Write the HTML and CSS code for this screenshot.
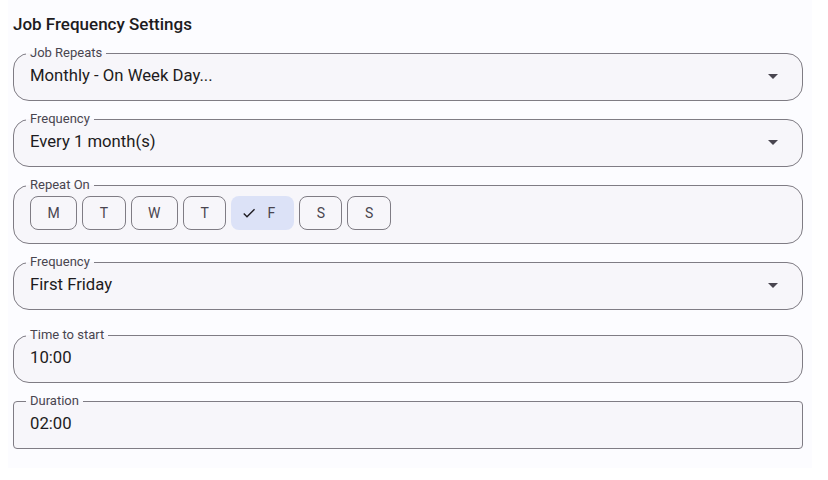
FILE: index.html
```html
<!DOCTYPE html>
<html lang="en">
<head>
<meta charset="utf-8">
<title>Job Frequency Settings</title>
<link rel="stylesheet" href="styles.css">
</head>
<body>
<div class="panel">
  <h2 class="title">Job Frequency Settings</h2>

  <fieldset class="field">
    <legend>Job Repeats</legend>
    <div class="row">
      <span class="value">Monthly - On Week Day...</span>
      <svg class="arrow" viewBox="0 0 24 24" width="24" height="24"><path d="M7 10l5 5 5-5z"/></svg>
    </div>
  </fieldset>

  <fieldset class="field">
    <legend>Frequency</legend>
    <div class="row">
      <span class="value">Every 1 month(s)</span>
      <svg class="arrow" viewBox="0 0 24 24" width="24" height="24"><path d="M7 10l5 5 5-5z"/></svg>
    </div>
  </fieldset>

  <fieldset class="field">
    <legend>Repeat On</legend>
    <div class="chips">
      <span class="chip">M</span>
      <span class="chip">T</span>
      <span class="chip">W</span>
      <span class="chip">T</span>
      <span class="chip selected"><svg class="check" viewBox="0 0 24 24" width="16" height="16"><path d="M9 16.17L4.83 12l-1.42 1.41L9 19 21 7l-1.41-1.41z"/></svg>F</span>
      <span class="chip">S</span>
      <span class="chip">S</span>
    </div>
  </fieldset>

  <fieldset class="field">
    <legend>Frequency</legend>
    <div class="row">
      <span class="value">First Friday</span>
      <svg class="arrow" viewBox="0 0 24 24" width="24" height="24"><path d="M7 10l5 5 5-5z"/></svg>
    </div>
  </fieldset>

  <fieldset class="field time">
    <legend>Time to start</legend>
    <div class="row">
      <span class="value">10:00</span>
    </div>
  </fieldset>

  <fieldset class="field square">
    <legend>Duration</legend>
    <div class="row">
      <span class="value">02:00</span>
    </div>
  </fieldset>
</div>
</body>
</html>
```

FILE: styles.css
```css
html, body {
  margin: 0;
  padding: 0;
  background: #ffffff;
}

body {
  font-family: Roboto, "Noto Sans", Arial, sans-serif;
  color: #1d1b20;
}

.panel {
  margin-left: 8px;
  width: 804px;
  box-sizing: border-box;
  padding: 14px 9px 19px 5px;
  background: #fcfcff;
}

.title {
  margin: 0 0 11px 0;
  font-size: 17px;
  line-height: 20px;
  font-weight: 500;
  color: #1d1b20;
}

.field {
  margin: 0 0 10px 0;
  padding: 0 17px 0 12px;
  border: 1px solid #7f7c84;
  border-radius: 16px;
  background: #f7f6fa;
  min-width: 0;
}

.field:last-child {
  margin-bottom: 0;
}

.field.time {
  margin-top: 17px;
}

.field.square {
  border-radius: 4px;
}

.field legend {
  padding: 0 4px;
  font-size: 13px;
  line-height: 16px;
  color: #49454f;
}

.row {
  display: flex;
  align-items: center;
  justify-content: space-between;
  padding: 3px 0 12px 4px;
  height: 24px;
}

.value {
  font-size: 16.7px;
  line-height: 24px;
  color: #1d1b20;
}

.arrow {
  fill: #49454f;
  display: block;
}

.chips {
  display: flex;
  gap: 5px;
  padding: 3px 0 13px 4px;
}

.chip {
  display: inline-flex;
  align-items: center;
  height: 34px;
  box-sizing: border-box;
  padding: 0 16.5px;
  border: 1px solid #7f7c84;
  border-radius: 8px;
  font-size: 14px;
  font-weight: 400;
  color: #49454f;
}

.chip.selected {
  border-color: transparent;
  background: #dce2f7;
  padding: 0 18px 0 9px;
  gap: 10px;
}

.check {
  fill: #1d1b20;
  display: block;
}
```
